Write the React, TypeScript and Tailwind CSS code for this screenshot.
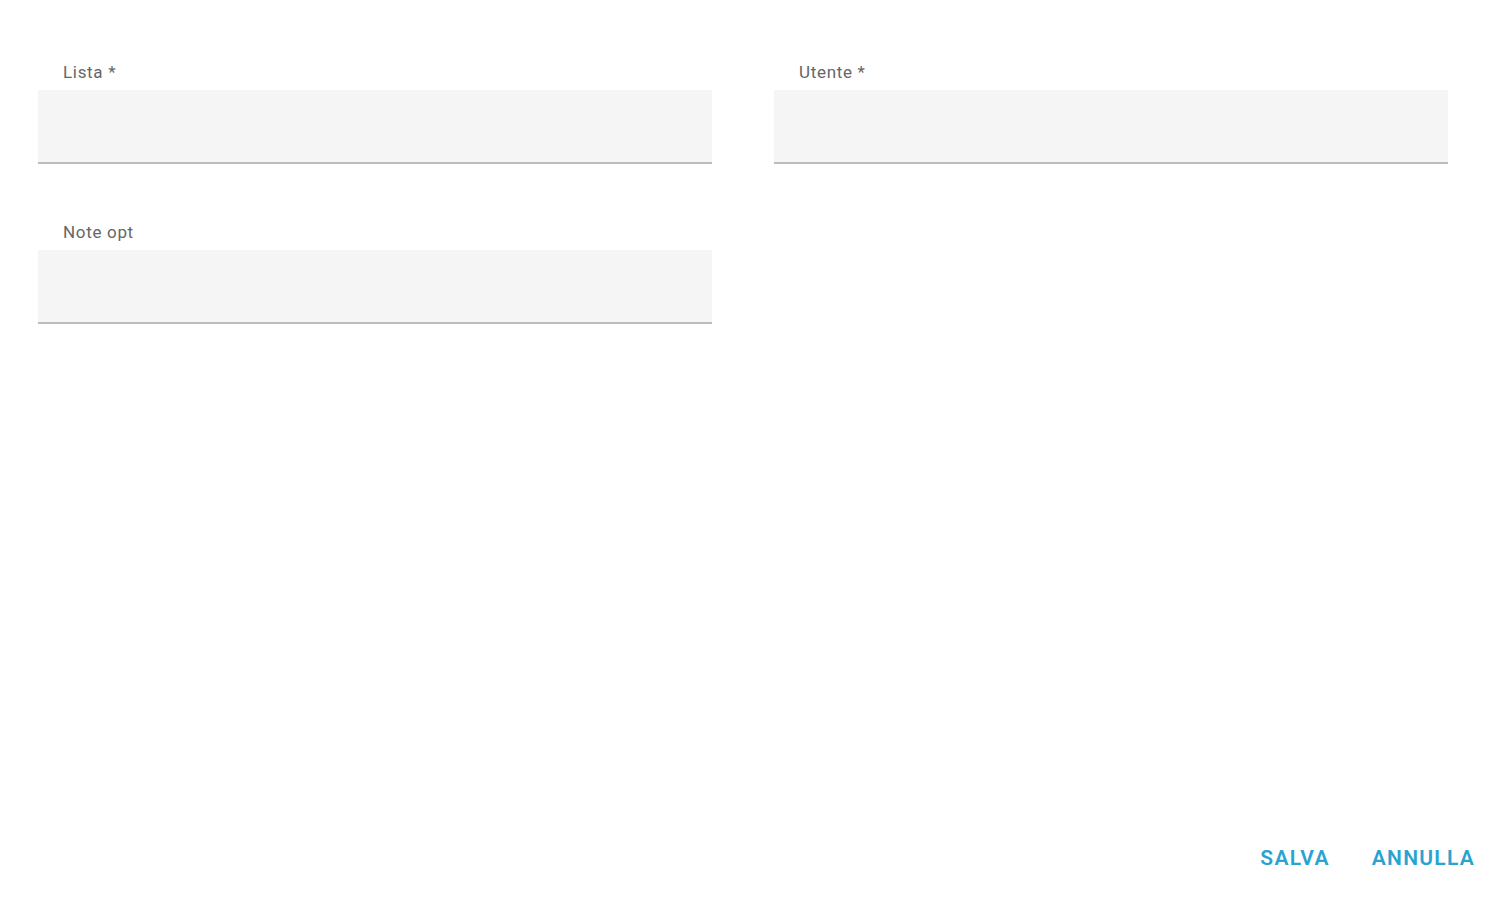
import { useState } from 'react';

interface FieldProps {
  id: string;
  label: string;
  value: string;
  onChange: (value: string) => void;
}

function FilledField({ id, label, value, onChange }: FieldProps) {
  return (
    <div className="flex flex-col">
      <label
        htmlFor={id}
        className="h-[20px] pl-[25px] text-[17px] leading-[20px] tracking-[0.04em] text-[#666]"
      >
        {label}
      </label>
      <input
        id={id}
        type="text"
        value={value}
        onChange={(event) => onChange(event.target.value)}
        className="mt-[8px] h-[74px] w-full border-b-2 border-[#bcbcbc] bg-[#f5f5f5] px-[25px] text-[16px] text-[#333] outline-none"
      />
    </div>
  );
}

export default function App() {
  const [lista, setLista] = useState('');
  const [utente, setUtente] = useState('');
  const [note, setNote] = useState('');

  return (
    <div className="flex h-[900px] w-full flex-col bg-white font-['Roboto',sans-serif]">
      <form className="flex flex-1 flex-col" onSubmit={(event) => event.preventDefault()}>
        <div className="grid grid-cols-[674px_674px] gap-x-[62px] gap-y-[58px] pl-[38px] pt-[62px]">
          <FilledField id="lista" label="Lista *" value={lista} onChange={setLista} />
          <FilledField id="utente" label="Utente *" value={utente} onChange={setUtente} />
          <FilledField id="note" label="Note opt" value={note} onChange={setNote} />
        </div>

        <div className="mt-auto flex justify-end gap-[42px] pb-[26px] pr-[26px]">
          <button
            type="submit"
            className="text-[21px] font-semibold tracking-[0.06em] text-[#29a3d0]"
          >
            SALVA
          </button>
          <button
            type="button"
            onClick={() => {
              setLista('');
              setUtente('');
              setNote('');
            }}
            className="text-[21px] font-semibold tracking-[0.06em] text-[#29a3d0]"
          >
            ANNULLA
          </button>
        </div>
      </form>
    </div>
  );
}
